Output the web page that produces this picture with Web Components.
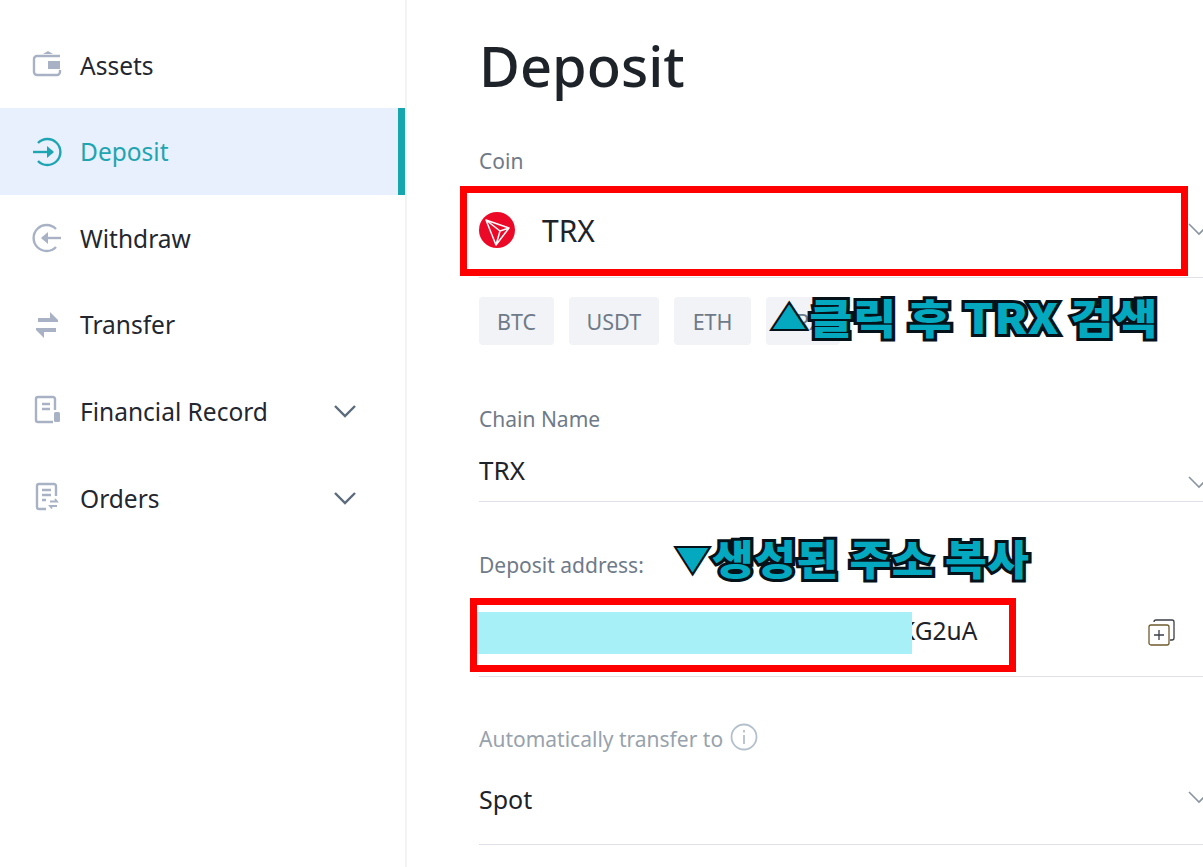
<!DOCTYPE html>
<html>
<head>
<meta charset="utf-8">
<title>Deposit</title>
<style>
html, body { margin: 0; height: 100%; overflow: hidden; background: #fff; }
body { display: flex; font-family: "Noto Sans", "Noto Sans CJK KR", sans-serif; color: #1e2329; }
</style>
</head>
<body>

<template id="nav-item-tpl">
  <style>
    :host { display: flex; align-items: center; height: 86.6px; padding-left: 29px; box-sizing: border-box; font-size: 24.5px; color: #23272f; position: relative; }
    :host([active]) { background: #e8f0fd; color: #1fa4b2; }
    :host([active])::after { content: ""; position: absolute; right: 0; top: 0; bottom: 0; width: 7px; background: #17a5ae; }
    .icon { width: 36px; height: 36px; margin-right: 15px; flex: none; }
    .label { flex: 1; }
    .chev { width: 24px; height: 14px; margin-right: 48px; display: none; }
    :host([expandable]) .chev { display: block; }
  </style>
  <span class="icon"><slot name="icon"></slot></span>
  <span class="label"><slot></slot></span>
  <svg class="chev" viewBox="0 0 24 14" fill="none" stroke="#5c6b7c" stroke-width="2.4"><path d="M2 2l10 10L22 2"/></svg>
</template>

<template id="side-nav-tpl">
  <style>
    :host { display: block; width: 407px; flex: none; height: 867px; box-sizing: border-box; padding-top: 21.8px; border-right: 2px solid #f2f3f5; }
  </style>
  <slot></slot>
</template>

<template id="form-field-tpl">
  <style>
    :host { display: block; --top: 0px; --bottom: 0px; }
    .label { display: flex; align-items: center; gap: 8px; height: 26px; font-size: 21px; color: #6f7a88; }
    :host([muted]) .label { color: #98a2ad; }
    .control { display: flex; align-items: center; height: 30px; padding: var(--top) 0 var(--bottom); border-bottom: 1px solid #dfe1e5; font-size: var(--size, 25px); color: #1e2329; position: relative; }
    .chev { position: absolute; right: -8px; top: var(--chev, calc(var(--top) + 6px)); width: 24px; height: 14px; }
    :host([nochevron]) .chev { display: none; }
  </style>
  <div class="label"><slot name="label"></slot></div>
  <div class="control">
    <slot></slot>
    <svg class="chev" viewBox="0 0 24 14" fill="none" stroke="#8b95a1" stroke-width="1.6"><path d="M2 2l10 10L22 2"/></svg>
  </div>
</template>

<template id="coin-chip-tpl">
  <style>
    :host { display: flex; align-items: center; justify-content: center; height: 48px; padding: 0 18px; background: #f1f3f7; border-radius: 4px; font-size: 21.5px; color: #6f7a88; }
  </style>
  <slot></slot>
</template>

<template id="mark-box-tpl">
  <style>
    :host { display: block; position: absolute; box-sizing: border-box; border: 7px solid #ff0000; pointer-events: none; }
  </style>
</template>

<template id="note-text-tpl">
  <style>
    :host { display: flex; align-items: center; position: absolute; white-space: nowrap; font-family: "Noto Sans CJK KR", sans-serif; font-weight: 900; font-size: 41px; line-height: 50px; letter-spacing: 0.5px; color: #04a9bf; -webkit-text-stroke: 6px #06121a; paint-order: stroke fill; transform-origin: left center; }
    .tri { font-size: 30px; -webkit-text-stroke: 4px #06121a; margin-right: 2px; }
  </style>
  <span class="tri"><slot name="tri"></slot></span>
  <slot></slot>
</template>

<template id="deposit-panel-tpl">
  <style>
    :host { display: block; flex: 1; position: relative; height: 867px; overflow: hidden; padding-left: 72px; box-sizing: border-box; }
    h1 { margin: 0; height: 148px; padding-top: 27px; box-sizing: border-box; font-size: 56px; line-height: 76px; font-weight: 500; color: #1e2329; }
  </style>
  <h1>Deposit</h1>
  <slot></slot>
</template>

<template id="chip-row-tpl">
  <style>
    :host { display: flex; gap: 14.5px; margin-top: 19px; height: 48px; }
  </style>
  <slot></slot>
</template>

<side-nav>
  <nav-item>
    <svg slot="icon" width="36" height="36" viewBox="0 0 36 36" fill="none" stroke="#a8b2c4" stroke-width="2.4"><path d="M31 9H8a3 3 0 0 0-3 3v13a3 3 0 0 0 3 3h20a3 3 0 0 0 3-3v-2"/><path d="M14 7l5-3 5 3z" fill="#a8b2c4" stroke="none"/><rect x="19" y="14" width="12" height="8" fill="#a8b2c4" stroke="none"/></svg>
    Assets
  </nav-item>
  <nav-item active>
    <svg slot="icon" width="36" height="36" viewBox="0 0 36 36" fill="none" stroke="#1fa4b2" stroke-width="2.4"><path d="M9 9a13 13 0 1 1 0 18"/><path d="M4 18h20"/><path d="M18 12l7 6-7 6z" fill="#1fa4b2" stroke="none"/></svg>
    Deposit
  </nav-item>
  <nav-item>
    <svg slot="icon" width="36" height="36" viewBox="0 0 36 36" fill="none" stroke="#a8b2c4" stroke-width="2.4"><path d="M27 9a13 13 0 1 0 0 18"/><path d="M32 18H13"/><path d="M19 12l-7 6 7 6z" fill="#a8b2c4" stroke="none"/></svg>
    Withdraw
  </nav-item>
  <nav-item>
    <svg slot="icon" width="36" height="36" viewBox="0 0 36 36" fill="#a8b2c4"><path d="M9 11h12V5l8 8v2H9z"/><path d="M27 25H15v6l-8-8v-2h20z"/></svg>
    Transfer
  </nav-item>
  <nav-item expandable>
    <svg slot="icon" width="36" height="36" viewBox="0 0 36 36" fill="none" stroke="#a8b2c4" stroke-width="2.4"><path d="M26 17V6a2 2 0 0 0-2-2H9a2 2 0 0 0-2 2v21a2 2 0 0 0 2 2h15"/><path d="M13 11h8M13 16h8"/><rect x="25" y="19" width="6" height="10" rx="1.5" fill="#a8b2c4" stroke="none"/></svg>
    Financial Record
  </nav-item>
  <nav-item expandable>
    <svg slot="icon" width="36" height="36" viewBox="0 0 36 36" fill="none" stroke="#a8b2c4" stroke-width="2.4"><path d="M27 16V6a2 2 0 0 0-2-2H10a2 2 0 0 0-2 2v21a2 2 0 0 0 2 2h7"/><path d="M13 10h9M13 15h9M13 20h4"/><path d="M21 21.5h7l-2-2.5M28 26h-7l2 2.5" stroke-width="1.8"/></svg>
    Orders
  </nav-item>
</side-nav>

<deposit-panel>
  <form-field style="--top:41px;--bottom:32px;--size:30px;--chev:48px">
    <span slot="label">Coin</span>
    <svg width="36" height="36" viewBox="0 0 36 36" style="margin-right:27px;flex:none"><circle cx="18" cy="18" r="18" fill="#ec0928"/><path d="M7 8l23 8-13 17zM7 8l14 11-4 14M21 19l9-3" fill="none" stroke="#fff" stroke-width="1.5" stroke-linejoin="round"/></svg>
    TRX
  </form-field>
  <chip-row>
    <coin-chip>BTC</coin-chip>
    <coin-chip>USDT</coin-chip>
    <coin-chip style="padding:0 19px">ETH</coin-chip>
    <coin-chip>TRX</coin-chip>
  </chip-row>
  <form-field style="--top:23px;--bottom:16px;--size:26px;--chev:43px;margin-top:61px">
    <span slot="label">Chain Name</span>
    TRX
  </form-field>
  <form-field nochevron style="--top:37px;--bottom:31px;margin-top:50px">
    <span slot="label">Deposit address:</span>
    <span style="padding-left:421px;font-size:24.5px">KG2uA</span>
    <svg width="27" height="27" viewBox="0 0 27 27" fill="none" stroke="#3a3f47" stroke-width="1.3" style="position:absolute;left:669px;top:41px"><rect x="1" y="6" width="20" height="20" rx="2" stroke="#6e5a2e"/><path d="M6 3V3a2 2 0 0 1 2-2h16a2 2 0 0 1 2 2v16a2 2 0 0 1-2 2h-2"/><path d="M11 11v10M6 16h10"/></svg>
  </form-field>
  <form-field muted style="--top:32px;--bottom:30px;margin-top:49px">
    <span slot="label" style="display:flex;align-items:center;gap:7px">Automatically transfer to <svg width="28" height="28" viewBox="0 0 28 28" fill="none" stroke="#b4c0cc" stroke-width="1.8" style="margin-bottom:4px"><circle cx="14" cy="14" r="12.5"/><path d="M14 12v9M14 7v2.4"/></svg></span>
    Spot
  </form-field>

  <mark-box style="left:53px;top:186px;width:728px;height:90px"></mark-box>
  <mark-box style="left:63px;top:598px;width:546px;height:74px"></mark-box>
  <div style="position:absolute;left:70px;top:612px;width:435px;height:42px;background:#a8f0f7"></div>
  <note-text style="left:365px;top:291px;transform:scaleX(1.147)"><span slot="tri">▲</span>클릭 후 TRX 검색</note-text>
  <note-text style="left:269px;top:532px;transform:scaleX(1.105)"><span slot="tri">▼</span>생성된 주소 복사</note-text>
</deposit-panel>

<script>
function define(name, tplId) {
  customElements.define(name, class extends HTMLElement {
    constructor() {
      super();
      this.attachShadow({ mode: 'open' }).appendChild(document.getElementById(tplId).content.cloneNode(true));
    }
  });
}
define('nav-item', 'nav-item-tpl');
define('side-nav', 'side-nav-tpl');
define('form-field', 'form-field-tpl');
define('coin-chip', 'coin-chip-tpl');
define('chip-row', 'chip-row-tpl');
define('mark-box', 'mark-box-tpl');
define('note-text', 'note-text-tpl');
define('deposit-panel', 'deposit-panel-tpl');
</script>
</body>
</html>
